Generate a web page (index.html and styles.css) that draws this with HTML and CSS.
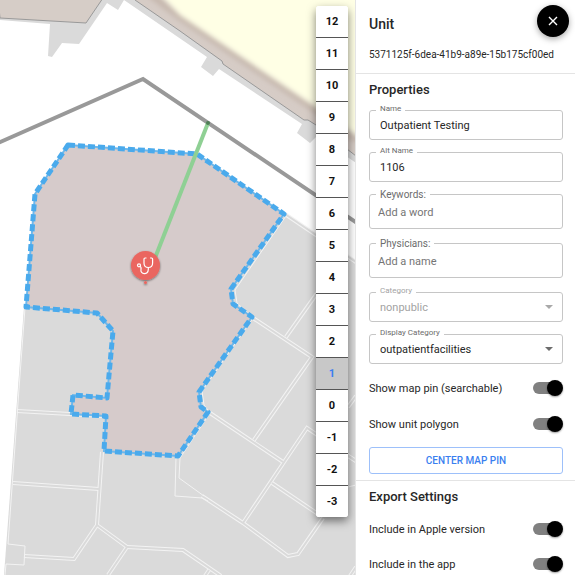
FILE: index.html
```html
<!DOCTYPE html>
<html lang="en">
<head>
<meta charset="utf-8">
<meta name="viewport" content="width=device-width, initial-scale=1">
<title>Unit editor</title>
<link rel="stylesheet" href="styles.css">
</head>
<body>
<div class="app">
  <main class="map">
    <svg class="map-canvas" viewBox="0 0 356 575" preserveAspectRatio="xMinYMin slice" role="img" aria-label="Floor map">
      <defs>
        <filter id="soft" x="-10%" y="-10%" width="120%" height="120%"><feGaussianBlur stdDeviation="2.5"/></filter>
        <filter id="drop" x="-30%" y="-30%" width="160%" height="170%"><feDropShadow dx="0" dy="1" stdDeviation="1" flood-opacity=".5"/></filter>
        <clipPath id="tower"><path d="M135 0 180 31 222 61 223 64 304 120 308 120 316 125 356 156V0Z"/></clipPath>
        <g id="walls">
          <path d="M285 214 356 262"/>
          <path d="M253 318 312 357 254 440"/>
          <path d="M286 337 320 289"/>
          <path d="M210 413 283 462"/>
          <path d="M356 461 307 428 243 523"/>
          <path d="M272 483 321 516"/>
          <path d="M202 496 243 523 288 556 298 554 323 518"/>
          <path d="M17 411 105 416"/>
          <path d="M13 483 99 489"/>
          <path d="M102 452 97 525 74 559 24 556"/>
          <path d="M97 525 127 547 108 575"/>
          <path d="M127 547 183 550 221 576M209 570 205 576"/>
          <path d="M356 396 348 407M348 456 356 461M356 567 350 576"/>
        </g>
      </defs>
      <rect class="ground" width="356" height="575"/>
      <path class="floor" d="M0 0H107L107 3 79 44 62 43 52 57 48 56 50 24 0 20Z"/>
      <path class="floor" d="M102 0H356V163L317 136 310 143 297 133 302 124 219 69 213 76 201 67 207 57 124 0 118 10 107 3Z"/>
      <path class="building" d="M-2-2H103L86 23 0 18Z"/>
      <g clip-path="url(#tower)">
        <rect class="building-fill" width="356" height="180"/>
        <path class="tower-shade" d="M150-6 180 17 316 110 356 140" filter="url(#soft)"/>
        <path class="tower-roof" d="M158-8 180 15 316 107 370 144V-20H158Z" filter="url(#soft)"/>
      </g>
      <path class="outline" d="M135 0 180 31 222 61 223 64 304 120 308 120 316 125 356 156"/>
      <path class="floor" d="M24 307 284 212 356 261V575H4Z"/>
      <use href="#walls" class="wall-edge"/>
      <use href="#walls" class="wall-core"/>
      <path class="wall-line" d="M25 308 20 375 8 544 25 546 24 565 6 564 5 575"/>
      <path class="wall-line" d="M286 216 235 290 237 303 253 318 202 391 204 405 210 413 180 458 179 478 204 496"/>
      <path class="wall-line" d="M176 457 175 496 202 498 208 501M348 487 356 485"/>
      <path class="corridor" d="M-2 143 143 79 357 223"/>
      <path class="unit-area" d="M68 145 197 154 284 214 231 289 233 304 252 317 199 392 201 407 208 412 178 456 104 451 106 416 71 414 73 395 107 398 109 375 113 331 97 313 26 307 35 194Z"/>
      <path class="unit-dash" d="M68 145 197 154 284 214 231 289 233 304 252 317 199 392 201 407 208 412 178 456 104 451 106 416 71 414 73 395 107 398 109 375 113 331 97 313 26 307 35 194Z"/>
      <path class="route" d="M208 123 155 258"/>
      <circle class="route-end" cx="208" cy="123" r="2"/>
      <g filter="url(#drop)">
        <circle class="pin" cx="145.500" cy="265.500" r="14.500"/>
        <circle class="pin" cx="145.500" cy="282.500" r="1.500"/>
      </g>
      <g class="pin-icon">
        <path d="M146.500 258h-1.500q-1 0-1 1v4c0 3 2 4.500 4.300 4.500s4.300-1.500 4.300-4.500v-4q0-1-1-1h-1.500"/>
        <path d="M148.300 267.500v2c0 6-8.500 5-7.300 0 .3-1.700 0-2.800-1.300-3.200"/>
        <circle cx="139" cy="265.300" r="1.500"/>
      </g>
    </svg>
    <nav class="floors" aria-label="Floors">
      <button type="button">12</button>
      <button type="button">11</button>
      <button type="button">10</button>
      <button type="button">9</button>
      <button type="button">8</button>
      <button type="button">7</button>
      <button type="button">6</button>
      <button type="button">5</button>
      <button type="button">4</button>
      <button type="button">3</button>
      <button type="button">2</button>
      <button type="button" class="current" aria-current="true">1</button>
      <button type="button">0</button>
      <button type="button">-1</button>
      <button type="button">-2</button>
      <button type="button">-3</button>
    </nav>
  </main>
  <aside class="panel">
    <header class="panel-head">
      <h1>Unit</h1>
      <p class="unit-id">5371125f-6dea-41b9-a89e-15b175cf00ed</p>
      <button type="button" class="close" aria-label="Close">
        <svg viewBox="0 0 16 16" width="16" height="16"><path d="M4 4 12 12M12 4 4 12"/></svg>
      </button>
    </header>
    <section class="properties">
      <h2>Properties</h2>
      <div class="field">
        <label for="name">Name</label>
        <input id="name" type="text" value="Outpatient Testing">
      </div>
      <div class="field">
        <label for="alt">Alt Name</label>
        <input id="alt" type="text" value="1106">
      </div>
      <div class="field tags">
        <label for="keywords">Keywords:</label>
        <input id="keywords" type="text" placeholder="Add a word">
      </div>
      <div class="field tags">
        <label for="physicians">Physicians:</label>
        <input id="physicians" type="text" placeholder="Add a name">
      </div>
      <div class="field disabled">
        <label for="category">Category</label>
        <select id="category" disabled><option>nonpublic</option></select>
        <svg class="arrow" viewBox="0 0 8 4" width="8" height="4"><path d="M0 0H8L4 4Z"/></svg>
      </div>
      <div class="field">
        <label for="display">Display Category</label>
        <select id="display"><option>outpatientfacilities</option></select>
        <svg class="arrow" viewBox="0 0 8 4" width="8" height="4"><path d="M0 0H8L4 4Z"/></svg>
      </div>
      <div class="switches">
        <label class="switch-row">Show map pin (searchable)<input type="checkbox" role="switch" checked></label>
        <label class="switch-row">Show unit polygon<input type="checkbox" role="switch" checked></label>
      </div>
      <button type="button" class="center-pin">CENTER MAP PIN</button>
    </section>
    <section class="export">
      <h2>Export Settings</h2>
      <div class="switches">
        <label class="switch-row">Include in Apple version<input type="checkbox" role="switch" checked></label>
        <label class="switch-row">Include in the app<input type="checkbox" role="switch" checked></label>
      </div>
    </section>
  </aside>
</div>
</body>
</html>
```
FILE: styles.css
```css
* { box-sizing: border-box; }

body {
  margin: 0;
  font-family: Roboto, "Liberation Sans", sans-serif;
  font-size: 11px;
  color: #272727;
}

h1, h2, p { margin: 0; }

button, input, select { font: inherit; color: inherit; }

.app {
  display: grid;
  grid-template-columns: minmax(0, 1fr) 220px;
  height: 100vh;
  overflow: hidden;
}

/* Map */
.map { position: relative; overflow: hidden; background: #fff; }
.map-canvas { display: block; width: 100%; height: 100%; }
.map-canvas path { fill: none; }
.map-canvas .ground { fill: #fff; }
.map-canvas .floor { fill: #dadada; }
.map-canvas .building { fill: #d6cdc7; stroke: #999; }
.map-canvas .building-fill { fill: #d6ccc6; }
.map-canvas .tower-shade { stroke: #c6b8ae; stroke-width: 7; }
.map-canvas .tower-roof { fill: #ffffe5; }
.map-canvas .outline { stroke: #999; }
.map-canvas .corridor { stroke: #999; stroke-width: 4; }
.wall-edge { stroke: #f3f3f3; stroke-width: 4; }
.wall-core { stroke: #dadada; stroke-width: 2; }
.map-canvas .wall-line { stroke: #f3f3f3; }
.map-canvas .unit-area { fill: #d6cbcb; stroke: #6fb8ea; stroke-width: 2; }
.map-canvas .unit-dash {
  stroke: #4aaaec;
  stroke-width: 5;
  stroke-linejoin: round;
  stroke-dasharray: 7 3;
}
.map-canvas .route { stroke: #8fd094; stroke-width: 4; }
.route-end { fill: #4f7d55; }
.pin { fill: #ea6660; }
.pin-icon { fill: none; stroke: #fff; stroke-width: 1.2; }

.floors {
  position: absolute;
  top: 6px;
  right: 7px;
  width: 32px;
  display: flex;
  flex-direction: column;
  background: #fff;
  border-radius: 3px;
  overflow: hidden;
  box-shadow: 0 4px 10px rgba(0, 0, 0, .5);
}
.floors button {
  height: 32px;
  padding: 0 0 1px;
  border: 0;
  border-bottom: 1px solid #555;
  background: #fff;
  color: #111;
  font-weight: 700;
}
.floors button:last-child { height: 31px; border-bottom: 0; }
.floors .current { background: #c8c8c8; color: #3b7ff0; }

/* Side panel */
.panel {
  background: #fff;
  border-left: 1px solid #e4e4e4;
  overflow: hidden;
}
.panel-head {
  position: relative;
  height: 74px;
  padding: 14px 12px 0 13px;
  border-bottom: 1px solid #e4e4e4;
}
.panel-head h1 { font-size: 14px; line-height: 20px; font-weight: 500; }
.unit-id { margin-top: 13px; font-size: 10px; line-height: 16px; }
.close {
  position: absolute;
  top: 5px;
  right: 6px;
  width: 32px;
  height: 32px;
  padding: 0;
  display: grid;
  place-items: center;
  border: 0;
  border-radius: 50%;
  background: #000;
  box-shadow: 0 2px 6px rgba(0, 0, 0, .35);
}
.close path { stroke: #fff; stroke-width: 1.4; }

.properties {
  padding: 7px 12px 6px 13px;
  border-bottom: 1px solid #e4e4e4;
}
.export { padding: 7px 12px 7px 13px; }
h2 { font-size: 13px; line-height: 17px; font-weight: 500; }

.field {
  position: relative;
  height: 30px;
  margin-top: 12px;
  border: 1px solid #c6c6c6;
  border-radius: 3px;
}
.field label {
  position: absolute;
  top: -8px;
  left: 6px;
  padding: 0 4px;
  background: #fff;
  color: #6c6c6c;
  font-size: 8px;
  line-height: 12px;
}
.field input, .field select {
  display: block;
  width: 100%;
  height: 100%;
  padding: 1px 10px 0;
  border: 0;
  background: transparent;
  outline: 0;
  appearance: none;
}
.field select { padding-top: 0; }
.field .arrow {
  position: absolute;
  right: 9px;
  top: 12px;
  fill: #6c6c6c;
  pointer-events: none;
}
.tags { height: 35px; }
.tags + .tags, .tags + .disabled { margin-top: 14px; }
.field.tags label { top: -6px; font-size: 10px; }
.field.tags input { padding: 1px 8px 0; }
.tags input::placeholder { color: #757575; opacity: 1; }
.field.disabled label, .field.disabled select { color: #a3a3a3; opacity: 1; }
.field.disabled .arrow { fill: #a9a9a9; }

.switches { display: grid; gap: 20px; margin: 16px 0 15px; }
.switch-row {
  display: flex;
  align-items: center;
  justify-content: space-between;
  height: 16px;
}
.switch-row input {
  position: relative;
  width: 30px;
  height: 16px;
  margin: 0;
  appearance: none;
}
.switch-row input::before {
  content: "";
  position: absolute;
  inset: 2px 2px 2px 0;
  border-radius: 6px;
  background: #808080;
}
.switch-row input::after {
  content: "";
  position: absolute;
  top: 0;
  right: 0;
  width: 16px;
  height: 16px;
  border-radius: 50%;
  background: #000;
  box-shadow: 0 1px 2px rgba(0, 0, 0, .4);
}
.export .switches { gap: 19px; }
.center-pin {
  display: block;
  width: 100%;
  height: 27px;
  padding: 0;
  border: 1px solid #9dc0fa;
  border-radius: 3px;
  background: #fff;
  color: #3b7ff0;
  font-size: 10px;
  font-weight: 500;
}
```
